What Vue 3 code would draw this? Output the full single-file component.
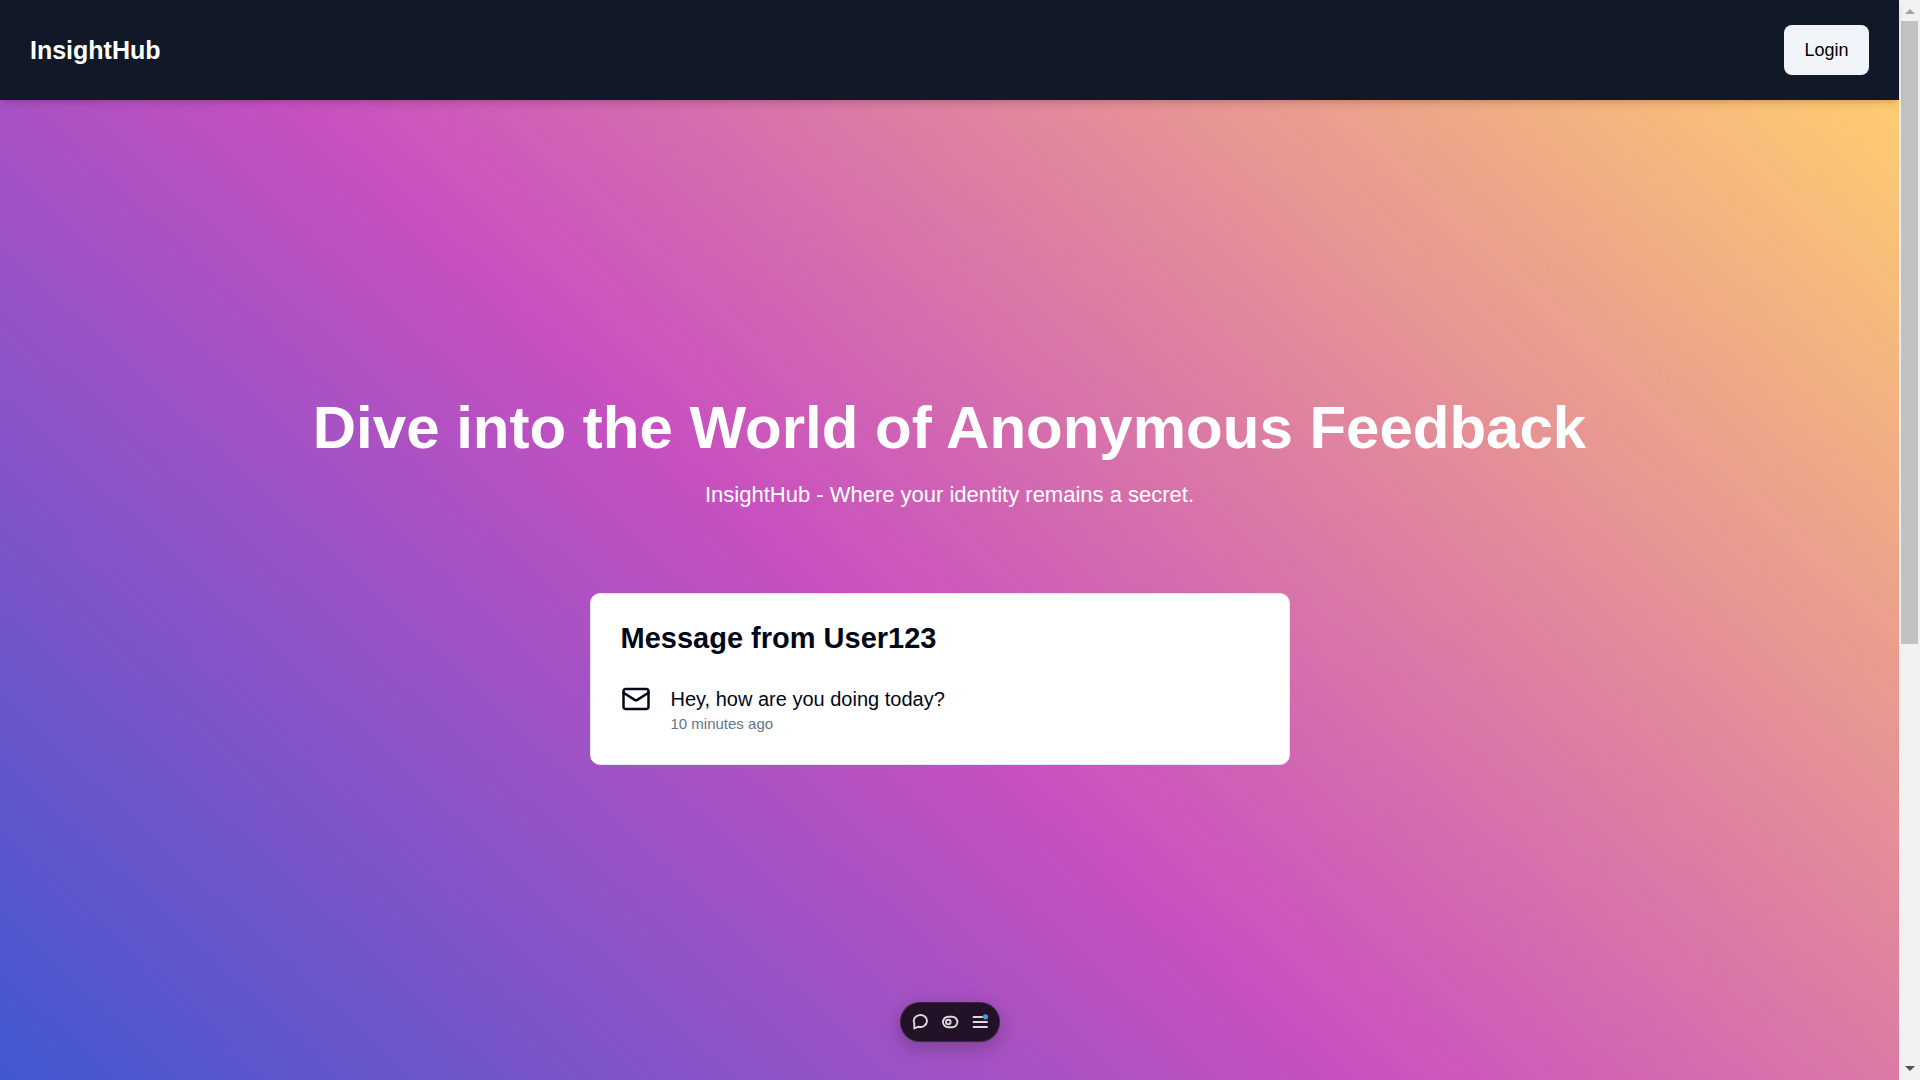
<script setup>
const messages = [
  { title: 'Message from User123', content: 'Hey, how are you doing today?', received: '10 minutes ago' },
]
</script>

<template>
  <div class="window">
    <div class="page">
      <header class="navbar">
        <a class="brand" href="#">InsightHub</a>
        <button class="login" type="button">Login</button>
      </header>

      <main class="hero">
        <section class="intro">
          <h1>Dive into the World of Anonymous Feedback</h1>
          <p>InsightHub - Where your identity remains a secret.</p>
        </section>

        <div class="carousel">
          <article v-for="message in messages" :key="message.title" class="card">
            <h2>{{ message.title }}</h2>
            <div class="message">
              <svg class="mail" viewBox="0 0 24 24" aria-hidden="true">
                <rect width="20" height="16" x="2" y="4" rx="2" />
                <path d="m22 7-8.97 5.7a1.94 1.94 0 0 1-2.06 0L2 7" />
              </svg>
              <div>
                <p class="content">{{ message.content }}</p>
                <p class="received">{{ message.received }}</p>
              </div>
            </div>
          </article>
        </div>
      </main>

      <div class="toolbar">
        <button type="button" aria-label="Comments">
          <svg viewBox="0 0 20 20" aria-hidden="true">
            <path d="M4.300 16.500 4.300 11.300A6.600 6 0 1 1 8.400 14.720Z" />
          </svg>
        </button>
        <button type="button" aria-label="Preview">
          <svg viewBox="0 0 20 20" aria-hidden="true">
            <rect x="3" y="4.700" width="14.400" height="10.600" rx="5.300" />
            <circle cx="8.300" cy="10" r="2.300" />
          </svg>
        </button>
        <button type="button" aria-label="Menu">
          <svg viewBox="0 0 20 20" aria-hidden="true">
            <path d="M3.500 5h8.500M3.500 10h13.500M3.500 15h13.500" />
            <circle class="dot" cx="15.500" cy="4.800" r="2.600" />
          </svg>
        </button>
      </div>
    </div>

    <div class="scrollbar" aria-hidden="true">
      <svg class="arrow up" viewBox="0 0 10 5"><path d="M5 0 10 5H0Z" /></svg>
      <div class="track"><div class="thumb"></div></div>
      <svg class="arrow down" viewBox="0 0 10 5"><path d="M0 0H10L5 5Z" /></svg>
    </div>
  </div>
</template>

<style>
body {
  margin: 0;
}
</style>

<style scoped>
* {
  box-sizing: border-box;
}

h1,
h2,
p {
  margin: 0;
}

button {
  border: 0;
  padding: 0;
  font: inherit;
  cursor: pointer;
}

.window {
  display: flex;
  min-height: 100vh;
  font-family: "Liberation Sans", Arial, sans-serif;
  color: #020817;
}

.page {
  position: relative;
  flex: 1;
  min-width: 0;
  display: flex;
  flex-direction: column;
}

.navbar {
  position: relative;
  z-index: 1;
  display: flex;
  align-items: center;
  justify-content: space-between;
  padding: 25px 30px;
  background: #111827;
  box-shadow: 0 5px 8px -1px rgb(0 0 0 / 0.1), 0 3px 5px -2px rgb(0 0 0 / 0.1);
}

.brand {
  color: #fff;
  font-size: 25px;
  font-weight: 700;
  line-height: 35px;
  text-decoration: none;
}

.login {
  min-width: 85px;
  height: 50px;
  padding: 0 20px;
  border-radius: 8px;
  background: #f1f5f9;
  color: #000;
  font-size: 18px;
}

.hero {
  flex: 1;
  display: flex;
  flex-direction: column;
  align-items: center;
  justify-content: center;
  gap: 82px;
  padding: 0 60px 18px;
  background: linear-gradient(43deg, #4158d0 0%, #c850c0 46%, #ffcc70 100%);
}

.intro {
  display: flex;
  flex-direction: column;
  gap: 20px;
  color: #fff;
  text-align: center;
}

.intro h1 {
  font-size: 60px;
  line-height: 62px;
}

.intro p {
  font-size: 22px;
  line-height: 32px;
}

.carousel {
  width: 100%;
  max-width: 720px;
  padding-right: 20px;
}

.card {
  display: flex;
  flex-direction: column;
  gap: 32px;
  padding: 30px;
  border: 1px solid #e2e8f0;
  border-radius: 10px;
  background: #fff;
}

.card h2 {
  font-size: 29px;
  line-height: 28px;
}

.message {
  display: flex;
  align-items: flex-start;
  gap: 20px;
}

.mail {
  flex: none;
  width: 30px;
  height: 30px;
  fill: none;
  stroke: currentColor;
  stroke-width: 2;
  stroke-linecap: round;
  stroke-linejoin: round;
}

.content {
  font-size: 20px;
  line-height: 30px;
}

.received {
  color: #64748b;
  font-size: 15px;
  line-height: 20px;
}

.toolbar {
  position: absolute;
  bottom: 38px;
  left: 50%;
  transform: translateX(-50%);
  display: flex;
  align-items: center;
  gap: 10px;
  height: 40px;
  padding: 0 10px;
  border-radius: 20px;
  background: #231128;
  box-shadow: inset 0 0 0 1px rgb(255 255 255 / 0.1), 0 5px 20px rgb(0 0 0 / 0.25);
}

.toolbar button {
  width: 20px;
  height: 20px;
  background: none;
}

.toolbar svg {
  display: block;
  fill: none;
  stroke: #dcd8dd;
  stroke-width: 1.9;
  stroke-linecap: round;
  stroke-linejoin: round;
}

.toolbar .dot {
  fill: #3e9bf5;
  stroke: none;
}

.scrollbar {
  flex: none;
  width: 21px;
  display: flex;
  flex-direction: column;
  align-items: center;
  gap: 7px;
  padding: 9px 0;
  background: #f1f1f1;
}

.arrow {
  width: 10px;
  height: 5px;
}

.up {
  fill: #a3a3a3;
}

.down {
  fill: #505050;
}

.track {
  flex: 1;
}

.thumb {
  width: 17px;
  height: 60%;
  background: #c1c1c1;
}
</style>
